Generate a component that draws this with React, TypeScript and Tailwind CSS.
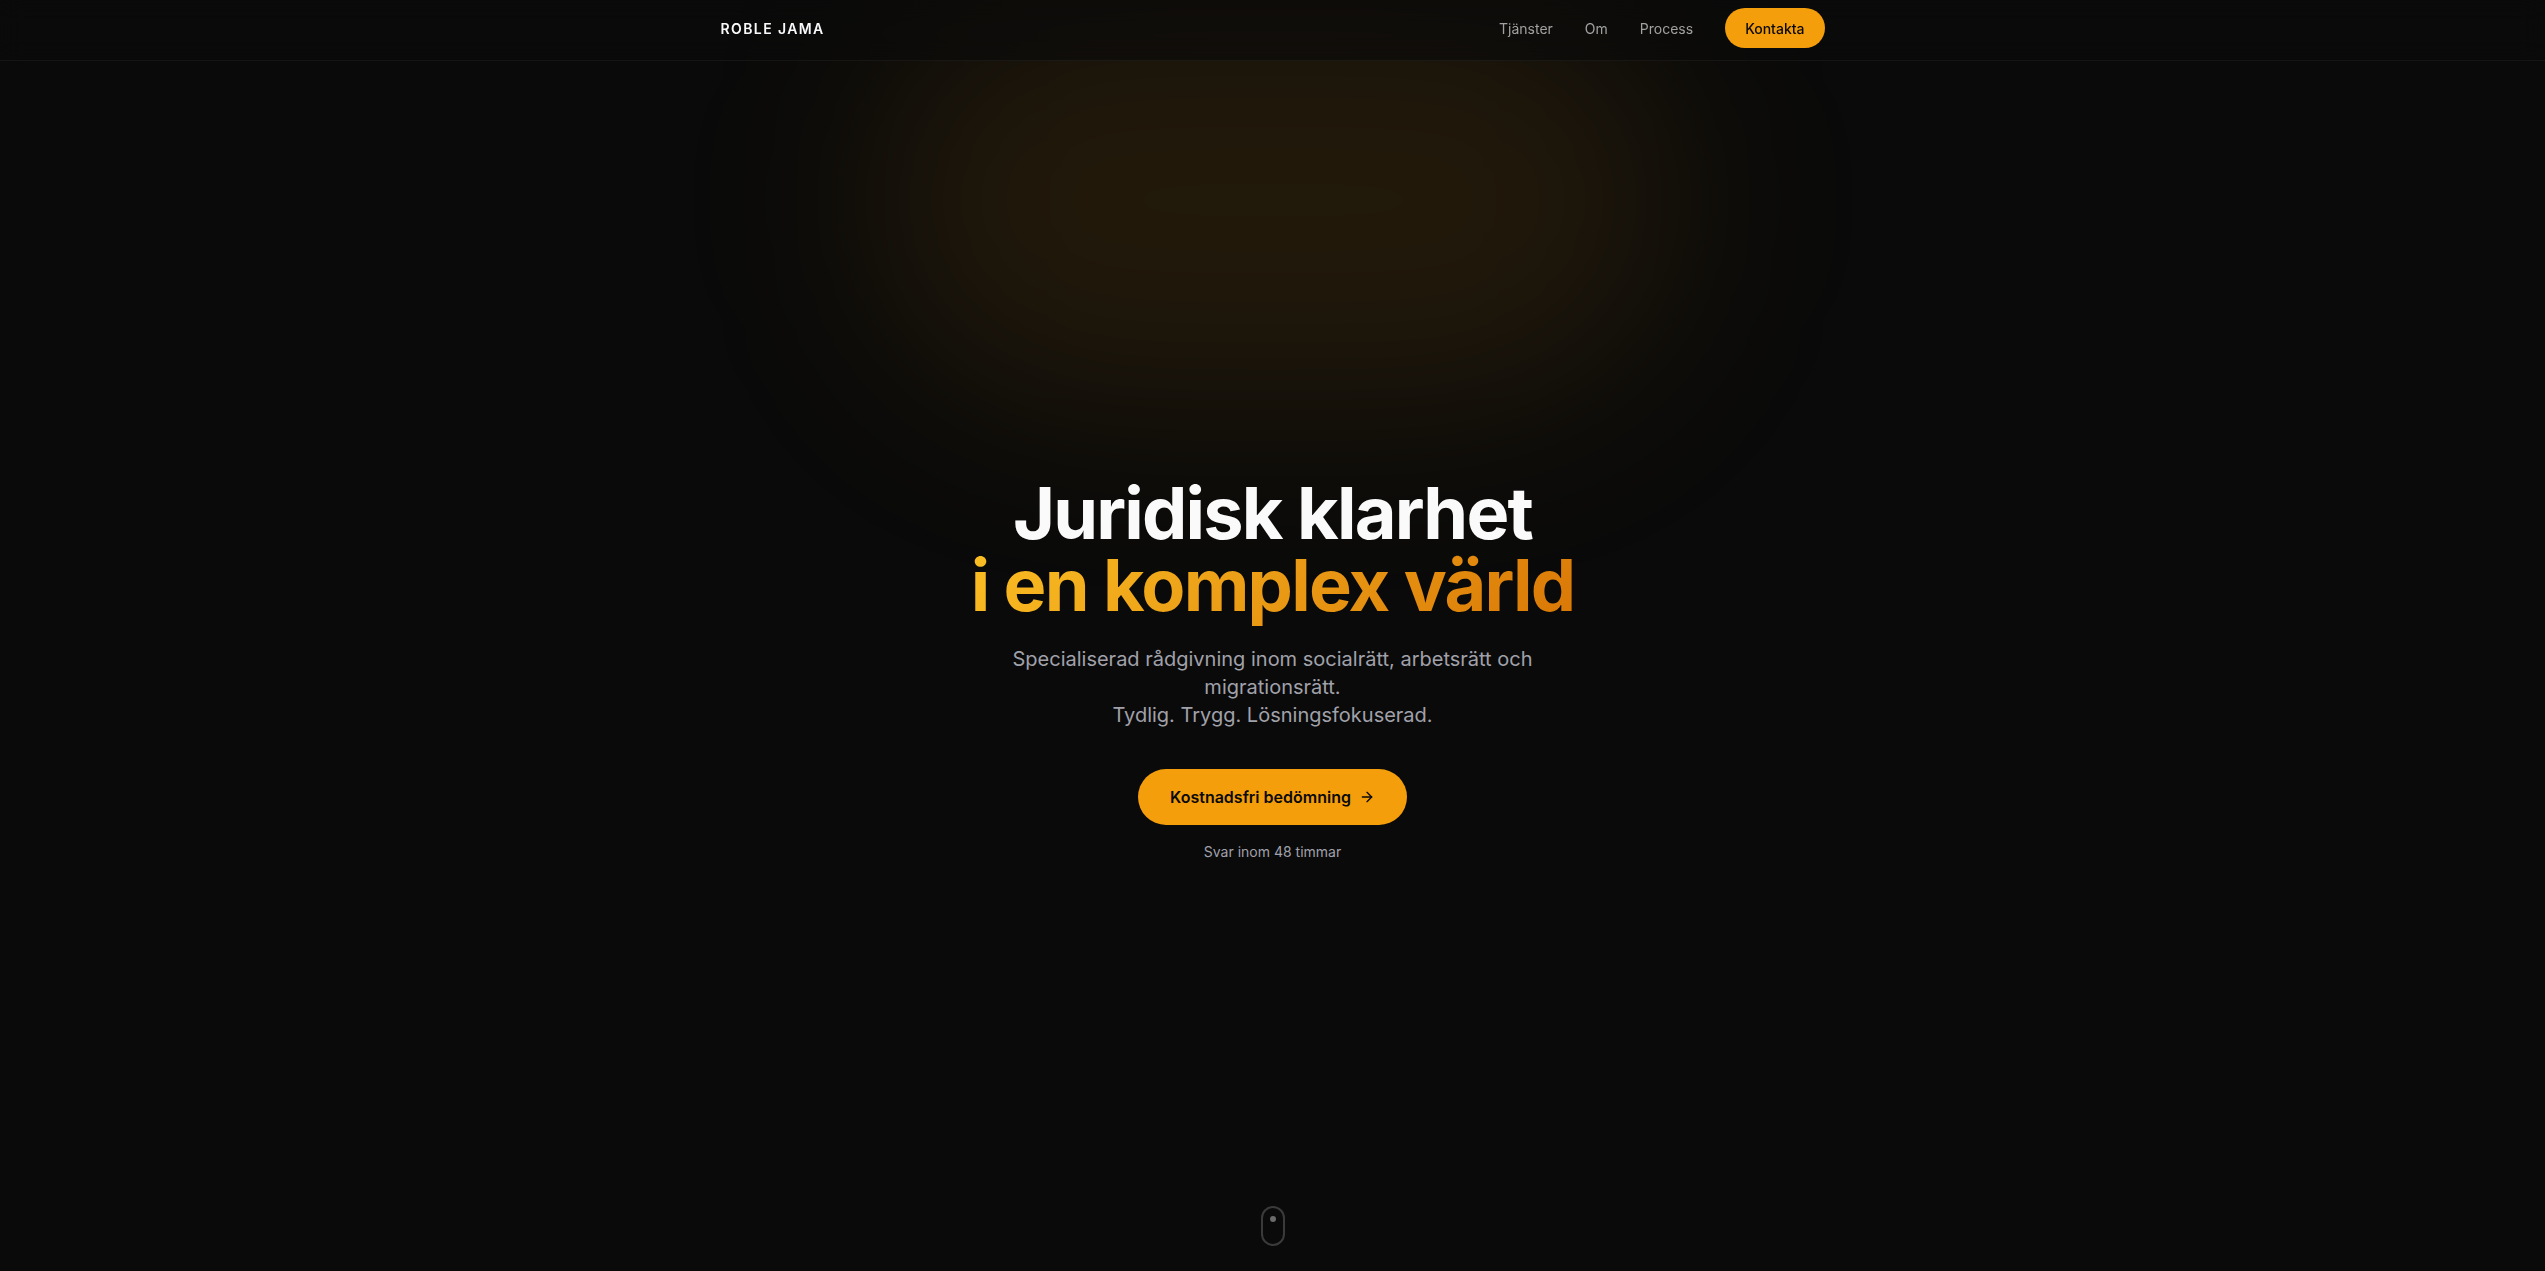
import { ArrowRight } from "lucide-react";

const navLinks = [
  { href: "#tjanster", label: "Tjänster" },
  { href: "#om", label: "Om" },
  { href: "#process", label: "Process" },
];

function Header() {
  return (
    <header className="fixed inset-x-0 top-0 z-50 border-b border-white/5 bg-[#0a0a0a]/60 backdrop-blur-md">
      <div className="mx-auto flex max-w-6xl items-center justify-between px-6 pt-2 pb-3 text-sm leading-[21px]">
        <a href="#" className="font-semibold tracking-widest text-neutral-50">
          ROBLE JAMA
        </a>
        <nav className="flex items-center gap-8">
          {navLinks.map((link) => (
            <a
              key={link.href}
              href={link.href}
              className="text-neutral-400 hover:text-white"
            >
              {link.label}
            </a>
          ))}
          <a
            href="#kontakt"
            className="flex h-10 items-center rounded-full bg-[#f59e0b] px-5 font-medium text-[#0a0a0a] hover:bg-amber-400"
          >
            Kontakta
          </a>
        </nav>
      </div>
    </header>
  );
}

function ScrollIndicator() {
  return (
    <div className="absolute bottom-[25px] left-1/2 flex h-10 w-6 -translate-x-1/2 justify-center rounded-full border-2 border-[#3a3a3a] pt-2">
      <div className="size-[6px] rounded-full bg-[#6b6b6b]" />
    </div>
  );
}

export default function App() {
  return (
    <div className="min-h-screen bg-[#0a0a0a] font-['Inter',sans-serif] text-neutral-50">
      <Header />

      <main className="relative flex min-h-screen items-center justify-center overflow-hidden px-6 pt-[68px]">
        {/* Amber glow */}
        <div className="pointer-events-none absolute top-0 left-1/2 h-[400px] w-[800px] -translate-x-1/2 rounded-full bg-[#f59e0b]/10 blur-[100px]" />

        <section className="relative flex flex-col items-center text-center">
          <h1 className="text-7xl leading-none font-bold tracking-tight">
            Juridisk klarhet
            <br />
            <span className="bg-[linear-gradient(135deg,#fbbf24,#d97706)] bg-clip-text text-transparent">
              i en komplex värld
            </span>
          </h1>

          <p className="mt-6 max-w-xl text-xl leading-7 text-[#a1a1aa]">
            Specialiserad rådgivning inom socialrätt, arbetsrätt och
            migrationsrätt.
            <br />
            Tydlig. Trygg. Lösningsfokuserad.
          </p>

          <a
            href="#kontakt"
            className="mt-10 flex h-14 items-center gap-2 rounded-full bg-[#f59e0b] px-8 font-semibold text-[#0a0a0a] hover:bg-amber-400"
          >
            Kostnadsfri bedömning
            <ArrowRight className="size-4" />
          </a>

          <p className="mt-4 text-sm leading-[21px] text-[#a1a1aa]">
            Svar inom 48 timmar
          </p>
        </section>

        <ScrollIndicator />
      </main>
    </div>
  );
}
